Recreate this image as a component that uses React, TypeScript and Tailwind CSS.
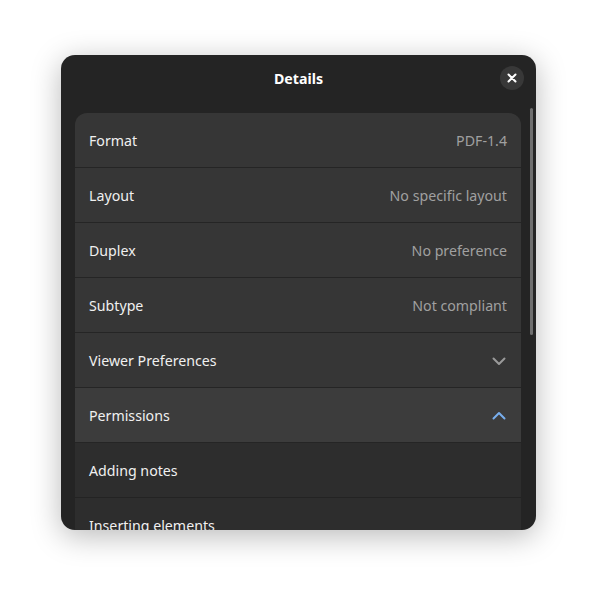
const rows = [
  { label: "Format", value: "PDF-1.4" },
  { label: "Layout", value: "No specific layout" },
  { label: "Duplex", value: "No preference" },
  { label: "Subtype", value: "Not compliant" },
];

function ChevronDown() {
  return (
    <svg width="16" height="16" viewBox="0 0 16 16" fill="none">
      <path d="M2.5 5.5 8 11l5.5-5.5" stroke="#9a9a9a" strokeWidth="2" strokeLinecap="round" strokeLinejoin="round" />
    </svg>
  );
}

function ChevronUp() {
  return (
    <svg width="16" height="16" viewBox="0 0 16 16" fill="none">
      <path d="M2.5 10.5 8 5l5.5 5.5" stroke="#78aeed" strokeWidth="2" strokeLinecap="round" strokeLinejoin="round" />
    </svg>
  );
}

export default function App() {
  return (
    <div className="h-[597px] w-full bg-white pl-[61px] pt-[55px]" style={{ fontFamily: '"Noto Sans", sans-serif' }}>
      <div className="relative flex h-[475px] w-[475px] flex-col overflow-hidden rounded-[14px] bg-[#242424] shadow-[0_6px_30px_rgba(0,0,0,0.28)]">
        <div className="flex h-[46px] shrink-0 items-center justify-center pt-px">
          <span className="text-[14.2px] font-bold text-white">Details</span>
          <button className="absolute right-[12px] top-[11px] flex h-[24px] w-[24px] items-center justify-center rounded-full bg-[#383838]">
            <svg width="10" height="10" viewBox="0 0 10 10">
              <path d="M1.5 1.5l7 7M8.5 1.5l-7 7" stroke="white" strokeWidth="2" strokeLinecap="round" />
            </svg>
          </button>
        </div>

        <div className="ml-[14px] mr-[15px] mt-[12px] flex flex-col overflow-hidden rounded-t-[12px] text-[14.2px]">
          {rows.map((r) => (
            <div key={r.label} className="flex h-[55px] shrink-0 items-center justify-between border-b border-[#252525] bg-[#363636] px-[14px] pt-[2px]">
              <span className="text-[#f0f0f0]">{r.label}</span>
              <span className="text-[#a0a0a0]">{r.value}</span>
            </div>
          ))}
          <div className="flex h-[55px] shrink-0 items-center justify-between border-b border-[#252525] bg-[#363636] px-[14px] pt-[2px]">
            <span className="text-[#f0f0f0]">Viewer Preferences</span>
            <ChevronDown />
          </div>
          <div className="flex h-[55px] shrink-0 items-center justify-between border-b border-[#252525] bg-[#3c3c3c] px-[14px] pt-[2px]">
            <span className="text-[#f0f0f0]">Permissions</span>
            <ChevronUp />
          </div>
          <div className="flex h-[55px] shrink-0 items-center border-b border-[#232323] bg-[#2d2d2d] px-[14px] pt-[2px]">
            <span className="text-[#f0f0f0]">Adding notes</span>
          </div>
          <div className="flex h-[55px] shrink-0 items-center border-b border-[#232323] bg-[#2d2d2d] px-[14px] pt-[2px]">
            <span className="text-[#f0f0f0]">Inserting elements</span>
          </div>
        </div>

        <div className="absolute right-[3px] top-[53px] h-[227px] w-[3px] rounded-full bg-[#6e6e6e]" />
      </div>
    </div>
  );
}
